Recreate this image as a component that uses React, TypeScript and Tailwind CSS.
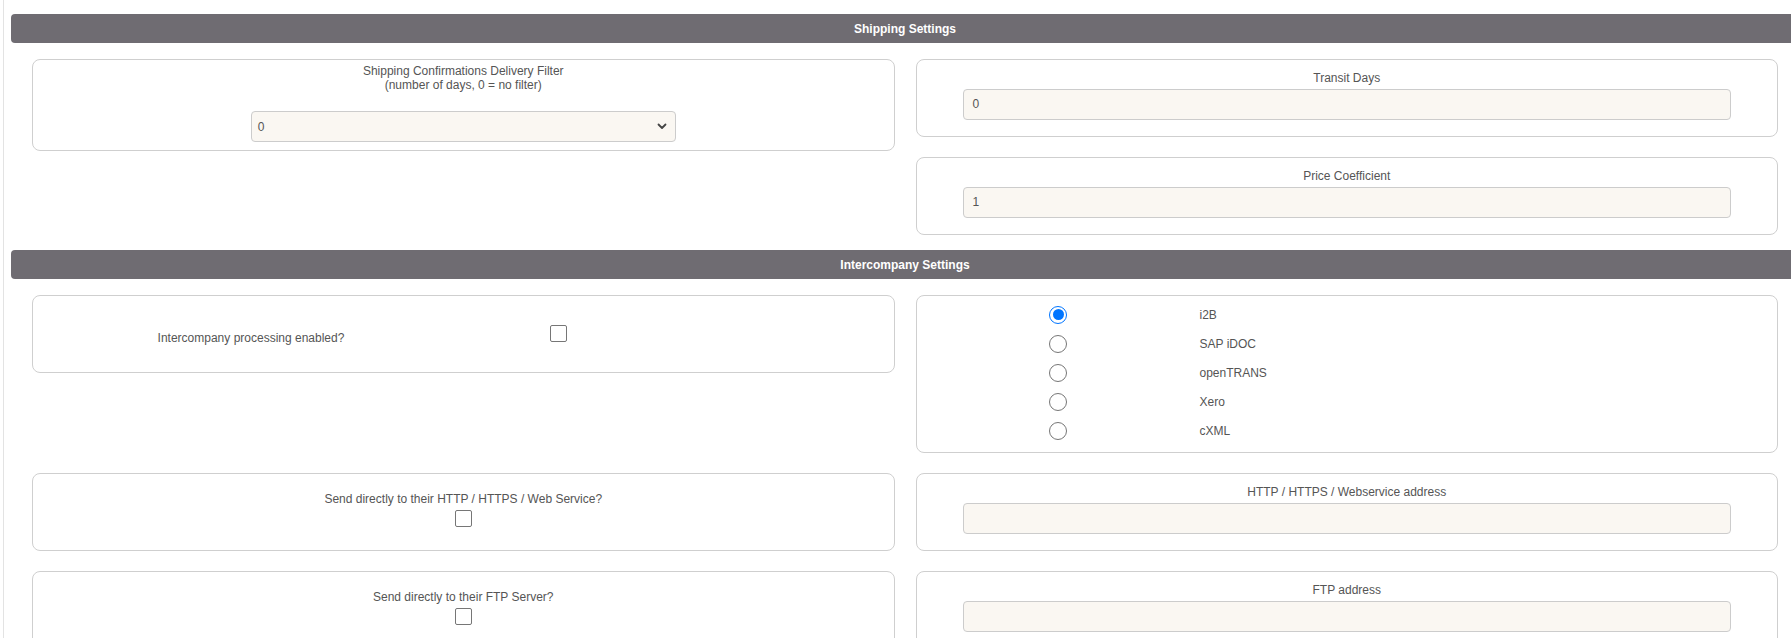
import React from "react";

const box = "border border-[#cfcfcf] rounded-[8px] bg-white";
const inputCls =
  "h-[31px] w-full rounded-[4px] border border-[#cccccc] bg-[#faf7f2] px-[9px] text-[12px] text-[#555] leading-[29px]";

function SectionHeader({ title }: { title: string }) {
  return (
    <div className="h-[29px] w-[1788px] rounded-[4px] bg-[#6f6c72] flex items-center justify-center">
      <span className="text-white font-bold text-[12px]">{title}</span>
    </div>
  );
}

function TextField({ label, value }: { label: string; value?: string }) {
  return (
    <div className={`${box} h-[78px] pt-[11px] px-[46px]`}>
      <div className="text-center text-[12px] leading-[14px] text-[#555]">{label}</div>
      <div className={`${inputCls} mt-[4px]`}>{value}</div>
    </div>
  );
}

function CheckField({ label }: { label: string }) {
  return (
    <div className={`${box} h-[78px] pt-[18px] flex flex-col items-center`}>
      <div className="text-[12px] leading-[14px] text-[#555]">{label}</div>
      <div className="mt-[4px] w-[17px] h-[17px] rounded-[2px] border border-[#767676] bg-white" />
    </div>
  );
}

function Radio({ checked }: { checked?: boolean }) {
  return checked ? (
    <div className="w-[18px] h-[18px] rounded-full border-[1.5px] border-[#0075ff] bg-white flex items-center justify-center">
      <div className="w-[11px] h-[11px] rounded-full bg-[#0075ff]" />
    </div>
  ) : (
    <div className="w-[18px] h-[18px] rounded-full border border-[#767676] bg-white" />
  );
}

const formats = ["i2B", "SAP iDOC", "openTRANS", "Xero", "cXML"];

export default function App() {
  return (
    <div
      className="w-full h-[638px] overflow-hidden bg-white"
      style={{ fontFamily: '"Liberation Sans", Arial, sans-serif' }}
    >
      <div className="ml-[3px] border-l border-[#e3e3e3] pl-[7px] pt-[14px] min-h-full w-[1800px]">
        <SectionHeader title="Shipping Settings" />

        <div className="w-[1788px] px-[21px] mt-[16px] grid grid-cols-2 gap-x-[21px]">
          <div>
            <div className={`${box} h-[92px] pt-[4px]`}>
              <div className="text-center text-[12px] leading-[14px] text-[#555]">
                Shipping Confirmations Delivery Filter
                <br />
                (number of days, 0 = no filter)
              </div>
              <div className="mt-[19px] mx-auto w-[425px] h-[31px] rounded-[4px] border border-[#cccccc] bg-[#faf7f2] flex items-center justify-between pl-[6px] pr-[8px]">
                <span className="text-[12px] text-[#555]">0</span>
                <svg width="10" height="7" viewBox="0 0 10 7" fill="none">
                  <path d="M1.5 1.5 5 5l3.5-3.5" stroke="#444" strokeWidth="1.8" strokeLinecap="round" strokeLinejoin="round" />
                </svg>
              </div>
            </div>
          </div>
          <div className="flex flex-col gap-[20px]">
            <TextField label="Transit Days" value="0" />
            <TextField label="Price Coefficient" value="1" />
          </div>
        </div>

        <div className="mt-[15px]">
          <SectionHeader title="Intercompany Settings" />
        </div>

        <div className="w-[1788px] px-[21px] mt-[16px] grid grid-cols-2 gap-x-[21px] gap-y-[20px] items-start">
          <div className={`${box} h-[78px] flex items-center`}>
            <div className="w-[436px] text-center text-[12px] leading-[14px] text-[#555] pt-[8px]">
              Intercompany processing enabled?
            </div>
            <div className="ml-[81px] mb-[2px] w-[17px] h-[17px] rounded-[2px] border border-[#767676] bg-white" />
          </div>
          <div className={`${box} h-[158px] pt-[4px]`}>
            {formats.map((f, i) => (
              <div key={f} className="grid grid-cols-[283px_1fr] items-center h-[29px]">
                <div className="flex justify-center">
                  <Radio checked={i === 0} />
                </div>
                <span className="text-[12px] text-[#555]">{f}</span>
              </div>
            ))}
          </div>

          <CheckField label="Send directly to their HTTP / HTTPS / Web Service?" />
          <TextField label="HTTP / HTTPS / Webservice address" />

          <CheckField label="Send directly to their FTP Server?" />
          <TextField label="FTP address" />
        </div>
      </div>
    </div>
  );
}
